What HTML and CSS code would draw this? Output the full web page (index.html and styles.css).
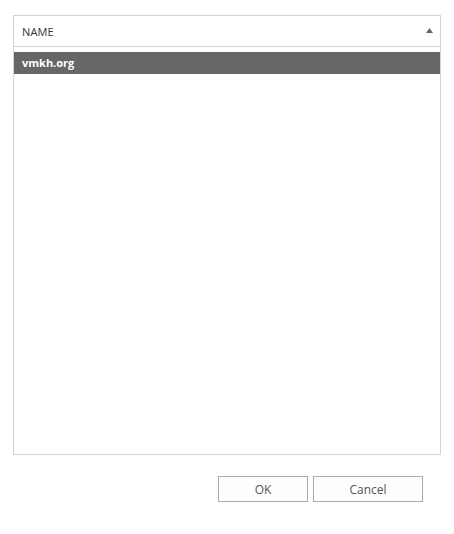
FILE: index.html
```html
<!DOCTYPE html>
<html>
<head>
<meta charset="utf-8">
<link rel="stylesheet" href="styles.css">
</head>
<body>
<div class="page">
  <div class="grid">
    <div class="grid-header">
      <span class="col-title">NAME</span>
      <svg class="sort" width="7" height="5" viewBox="0 0 7 5"><path d="M3.5 0 L7 5 L0 5 Z" fill="#666"/></svg>
    </div>
    <div class="grid-body">
      <div class="row selected">vmkh.org</div>
    </div>
  </div>
  <div class="actions">
    <button class="btn btn-ok">OK</button>
    <button class="btn btn-cancel">Cancel</button>
  </div>
</div>
</body>
</html>
```
FILE: styles.css
```css
html, body {
  margin: 0;
  padding: 0;
  background: #fff;
}
body {
  font-family: "Open Sans", "Noto Sans", "DejaVu Sans", sans-serif;
  color: #333;
}
.page {
  padding: 15px 0 0 13px;
}
.grid {
  width: 426px;
  height: 438px;
  border: 1px solid #d4d4d4;
  display: flex;
  flex-direction: column;
}
.grid-header {
  height: 30px;
  border-bottom: 1px solid #d4d4d4;
  display: flex;
  align-items: center;
  justify-content: space-between;
  padding: 0 7px 0 8px;
  flex-shrink: 0;
}
.col-title {
  font-size: 11px;
  color: #333;
  letter-spacing: 0.1px;
}
.sort {
  display: block;
  margin-top: -1px;
}
.grid-body {
  padding-top: 5px;
  flex: 1;
}
.row {
  height: 22px;
  line-height: 22px;
  padding-left: 8px;
  font-size: 11px;
}
.row.selected {
  background: #666666;
  color: #fff;
  font-weight: bold;
}
.actions {
  display: flex;
  gap: 5px;
  padding-left: 205px;
  margin-top: 21px;
}
.btn {
  height: 26px;
  border: 1px solid #ababab;
  background: #fdfdfd;
  font-family: "Open Sans", "Noto Sans", "DejaVu Sans", sans-serif;
  font-size: 12px;
  color: #555;
  padding: 0;
  margin: 0;
}
.btn-ok { width: 90px; }
.btn-cancel { width: 110px; }
```
